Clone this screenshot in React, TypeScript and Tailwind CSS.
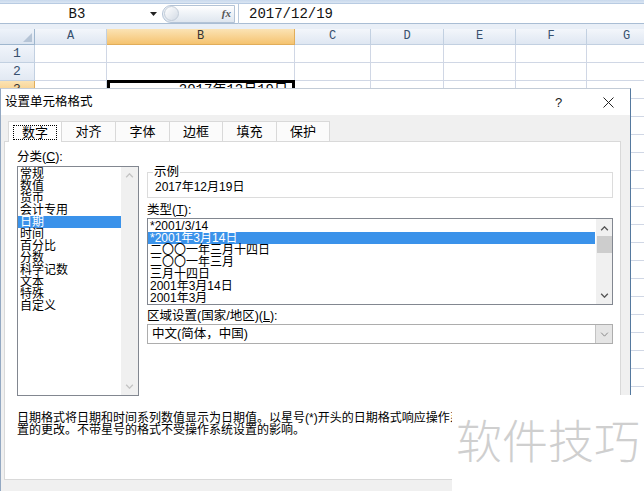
import React from "react";

const F = "font-['Liberation_Sans','Noto_Sans_CJK_SC',sans-serif]";
const M = "font-['Liberation_Mono','Noto_Sans_CJK_SC',monospace]";

function Chev({ dir, color, w = 9, sw = 1.6 }: { dir: "up" | "down"; color: string; w?: number; sw?: number }) {
  return (
    <svg width={w} height={Math.round(w * 0.6)} viewBox="0 0 10 6">
      <polyline
        points={dir === "up" ? "1,5.2 5,1 9,5.2" : "1,0.8 5,5 9,0.8"}
        fill="none"
        stroke={color}
        strokeWidth={sw}
      />
    </svg>
  );
}

const cols = ["A", "B", "C", "D", "E", "F", "G"];

function Sheet() {
  const rows = Array.from({ length: 24 }, (_, i) => i + 1);
  return (
    <div className={`w-[644px] ${M}`}>
      {/* formula bar */}
      <div className="h-[29px] flex flex-col bg-[#e9eff7]">
        <div className="h-[4px] bg-gradient-to-b from-[#c8d8ec] to-[#dbe6f3] border-b border-[#b8cbe2]" />
        <div className="h-[20px] flex items-center bg-white border-b border-[#a9bdd4]">
          <div className="w-[148px] text-center text-[14px] text-[#111] leading-none pl-[6px]">B3</div>
          <div className="w-[10px] flex items-center justify-center">
            <svg width="7" height="4" viewBox="0 0 7 4"><polygon points="0,0 7,0 3.5,4" fill="#222" /></svg>
          </div>
          <div className="ml-[4px] w-[73px] h-[18px] rounded-l-full rounded-r-[3px] border border-[#b3c3d6] bg-gradient-to-b from-[#ffffff] via-[#eef2f7] to-[#dfe6ef] flex items-center justify-between pl-[1px] pr-[3px]">
            <div className="w-[15px] h-[15px] rounded-full border border-[#c2ccd8] bg-gradient-to-br from-[#ffffff] to-[#d3dbe5]" />
            <span className="font-['Liberation_Serif',serif] italic font-bold text-[11px] text-[#555] leading-none">fx</span>
          </div>
          <div className="ml-[3px] w-px h-[20px] bg-[#b9c9dc]" />
          <div className="pl-[10px] text-[14px] text-[#111] leading-none">2017/12/19</div>
        </div>
        <div className="flex-1" />
      </div>
      {/* header row */}
      <div className="grid grid-cols-[35px_72px_188px_76px_73px_72px_71px_80px] h-[16px]">
        <div className="bg-gradient-to-b from-[#eef3fa] to-[#dbe4f0] border-r border-b border-[#9eb6ce] flex items-end justify-end pr-[2px] pb-[2px]">
          <svg width="9" height="9" viewBox="0 0 9 9"><polygon points="9,0 9,9 0,9" fill="#b5c4d6" /></svg>
        </div>
        {cols.map((c) => (
          <div
            key={c}
            className={`border-r border-b text-[12px] leading-[15px] text-center ${
              c === "B"
                ? "bg-gradient-to-b from-[#fbe3b4] to-[#f5c36f] border-[#e1ad5a] text-[#333]"
                : "bg-gradient-to-b from-[#f3f6fb] to-[#dfe7f2] border-[#c2d0e1] text-[#37506e]"
            }`}
          >
            {c}
          </div>
        ))}
      </div>
      {rows.map((r) => (
        <div key={r} className="grid grid-cols-[35px_72px_188px_76px_73px_72px_71px_80px] h-[18px]">
          <div
            className={`border-r border-b text-[13px] leading-[17px] text-center ${
              r === 3
                ? "bg-gradient-to-b from-[#fbe3b4] to-[#f5c36f] border-[#e1ad5a] text-[#333]"
                : "bg-gradient-to-b from-[#f1f5fb] to-[#e2e9f3] border-[#c2d0e1] text-[#37506e]"
            }`}
          >
            {r}
          </div>
          {cols.map((c) =>
            r === 3 && c === "B" ? (
              <div key={c} className="border-[3px] border-black -mt-[1px] text-right pr-[4px] text-[14px] leading-[14px] text-black overflow-hidden">
                2017年12月19日
              </div>
            ) : (
              <div key={c} className="border-r border-b border-[#d0d7e5] bg-white" />
            )
          )}
        </div>
      ))}
    </div>
  );
}

function ListItem({ text, sel }: { text: string; sel?: boolean }) {
  return (
    <div
      className={`h-[12px] leading-[12px] text-[12px] whitespace-nowrap pl-[2px] ${
        sel ? "bg-[#3a92ea] text-white" : "text-black"
      }`}
    >
      {text}
    </div>
  );
}

function Dialog() {
  const cats = ["常规", "数值", "货币", "会计专用", "日期", "时间", "百分比", "分数", "科学记数", "文本", "特殊", "自定义"];
  const types = ["*2001/3/14", "*2001年3月14日", "二〇〇一年三月十四日", "二〇〇一年三月", "三月十四日", "2001年3月14日", "2001年3月"];
  const tabs = [
    { t: "数字", w: 54 },
    { t: "对齐", w: 54 },
    { t: "字体", w: 54 },
    { t: "边框", w: 53 },
    { t: "填充", w: 54 },
    { t: "保护", w: 53 },
  ];
  return (
    <div
      className={`absolute left-0 top-[88px] w-[631px] h-[403px] bg-[#f0f0f0] border-t border-t-[#c3ccd7] border-l border-l-[#93a8c2] border-r border-r-[#55799f] flex flex-col ${F} text-black`}
    >
      {/* title bar */}
      <div className="h-[26px] bg-white flex items-center">
        <div className="pl-[4px] text-[12.5px] leading-none flex-1">设置单元格格式</div>
        <div className="w-[12px] text-[13px] leading-none mr-[36px] text-[#222]">?</div>
        <div className="mr-[16px] flex items-center">
          <svg width="11" height="11" viewBox="0 0 11 11">
            <line x1="0.5" y1="0.5" x2="10.5" y2="10.5" stroke="#222" strokeWidth="1" />
            <line x1="10.5" y1="0.5" x2="0.5" y2="10.5" stroke="#222" strokeWidth="1" />
          </svg>
        </div>
      </div>
      {/* tabs */}
      <div className="mt-[6px] h-[20px] flex pl-[7px] pr-[9px]">
        {tabs.map((tb, i) => (
          <div
            key={tb.t}
            style={{ width: tb.w }}
            className={`h-[20px] flex items-center justify-center text-[13px] leading-none border-t border-r border-[#d9d9d9] ${
              i === 0 ? "bg-white border-l relative z-10 h-[21px]" : "bg-[#fbfbfb]"
            }`}
          >
            {i === 0 ? (
              <span className="border border-dotted border-black px-[8px] h-[15px] flex items-center">{tb.t}</span>
            ) : (
              tb.t
            )}
          </div>
        ))}
      </div>
      {/* panel */}
      <div className="ml-[3px] mr-[9px] mb-[11px] flex-1 bg-white border border-[#d9d9d9] pt-[8px] pl-[12px] pr-[7px] flex flex-col">
        <div className="flex gap-[8px]">
          {/* left column */}
          <div className="w-[122px] flex flex-col">
            <div className="h-[16px] text-[12.5px] leading-[14px]">
              分类(<span className="underline">C</span>):
            </div>
            <div className="h-[230px] border border-[#828790] flex">
              <div className="flex-1 pt-[1px]">
                {cats.map((c) => (
                  <ListItem key={c} text={c} sel={c === "日期"} />
                ))}
              </div>
              <div className="w-[17px] bg-[#f0f0f0] flex flex-col items-center justify-between py-[6px]">
                <Chev dir="up" color="#c4c4c4" />
                <Chev dir="down" color="#c4c4c4" />
              </div>
            </div>
          </div>
          {/* right column */}
          <div className="w-[466px] flex flex-col">
            <fieldset className="mt-[15px] border border-[#dcdcdc] px-[7px]">
              <legend className="text-[12.5px] leading-[14px] px-[1px] -ml-[2px]">示例</legend>
              <div className="h-[19px] text-[12px] leading-[19px] -mt-[1px]">2017年12月19日</div>
            </fieldset>
            <div className="mt-[5px] h-[14px] text-[12.5px] leading-[14px]">
              类型(<span className="underline">T</span>):
            </div>
            <div className="mt-[1px] h-[87px] border border-[#828790] flex">
              <div className="flex-1 pt-[1px] pr-[1px]">
                {types.map((t, i) => (
                  <ListItem key={t} text={t} sel={i === 1} />
                ))}
              </div>
              <div className="w-[16px] bg-[#f0f0f0] flex flex-col items-center">
                <div className="h-[17px] flex items-center justify-center pt-[1px]">
                  <Chev dir="up" color="#555" />
                </div>
                <div className="w-[15px] h-[17px] bg-[#cdcdcd]" />
                <div className="flex-1" />
                <div className="h-[17px] flex items-center justify-center">
                  <Chev dir="down" color="#555" />
                </div>
              </div>
            </div>
            <div className="mt-[4px] h-[14px] text-[12.5px] leading-[14px]">
              区域设置(国家/地区)(<span className="underline">L</span>):
            </div>
            <div className="mt-[1px] h-[20px] border border-[#adadad] flex items-center">
              <div className="flex-1 pl-[4px] text-[12.5px] leading-none">中文(简体，中国)</div>
              <div className="w-[17px] h-[18px] bg-[#e5e5e5] border-l border-[#c3c3c3] flex items-center justify-center">
                <Chev dir="down" color="#8a8a8a" sw={1.2} />
              </div>
            </div>
          </div>
        </div>
        <div className="mt-[16px] text-[12px] leading-[12px] whitespace-nowrap">
          <div>日期格式将日期和时间系列数值显示为日期值。以星号(*)开头的日期格式响应操作系统特定的区域日期和时间设</div>
          <div>置的更改。不带星号的格式不受操作系统设置的影响。</div>
        </div>
      </div>
    </div>
  );
}

export default function App() {
  return (
    <div className="relative w-[644px] h-[491px] overflow-hidden bg-white">
      <Sheet />
      <Dialog />
      <div className="absolute right-0 bottom-0 w-[192px] h-[96px] bg-white pl-[4px] pt-[20px]">
        <div className="font-['Noto_Sans_CJK_SC',sans-serif] font-light text-[46px] leading-[46px] text-[#cfcfcf] whitespace-nowrap">
          软件技巧
        </div>
      </div>
    </div>
  );
}
